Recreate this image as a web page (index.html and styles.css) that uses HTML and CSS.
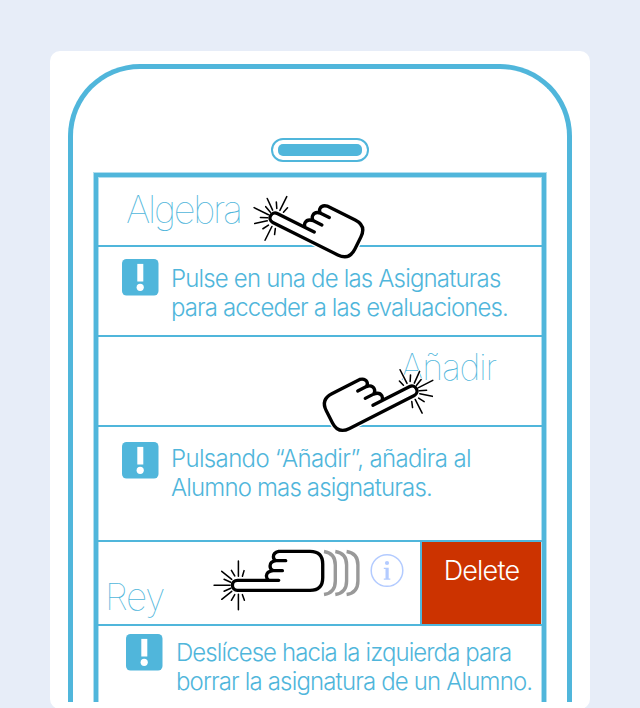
FILE: index.html
```html
<!DOCTYPE html>
<html lang="es">
<head>
<meta charset="utf-8">
<title>Asignaturas</title>
<link rel="stylesheet" href="styles.css">
</head>
<body>
<svg class="defs" aria-hidden="true">
  <defs>
    <path id="hand-shape" d="M124 -15H0A15 15 0 0 0 0 15H218Q256 15 256 -23V-64Q256 -102 218 -102H124Q108 -98 108 -86Q108 -78 116 -74H145M116 -74Q98 -72 98 -58Q98 -48 107 -44H135M107 -44Q88 -42 87 -28Q87 -20 94 -15"/>
    <path id="rays" d="M3 -73V-27M3 27V73M-70 0H-22M-47 -42L-17 -18M-47 42L-17 18M-18 -45L-8 -28M20 -44L15 -27M-18 45L-8 28M15 28L21 45M-40 -18L-20 -9M-40 18L-20 9"/>
    <g id="hand">
      <use href="#rays" class="ray-halo"/>
      <use href="#hand-shape" class="hand-halo"/>
      <use href="#hand-shape" class="hand-line"/>
      <use href="#rays" class="ray-line"/>
    </g>
    <symbol id="alert" viewBox="0 0 37 37">
      <rect width="36.5" height="36.5" rx="4.5" fill="#50b6db"/>
      <rect x="15.3" y="4.9" width="6" height="17.6" fill="#fff"/>
      <circle cx="18.2" cy="28.3" r="3.6" fill="#fff"/>
    </symbol>
  </defs>
</svg>
<main class="card">
  <div class="phone">
    <div class="speaker"><div class="speaker-slot"></div></div>
    <div class="screen">
      <section class="row row-subject">
        <h2 class="thin subject">Algebra</h2>
        <svg class="tap tap-subject" viewBox="0 0 150 110"><use href="#hand" transform="translate(45 58) rotate(26.5) scale(.3333)"/></svg>
      </section>
      <section class="row row-note note-one">
        <svg class="alert"><use href="#alert"/></svg>
        <p class="note"><span class="l1">Pulse en una de las Asignaturas</span><br><span class="l2">para acceder a las evaluaciones.</span></p>
      </section>
      <section class="row row-add">
        <h2 class="thin add">Añadir</h2>
        <svg class="tap tap-add" viewBox="0 0 150 110"><use href="#hand" transform="translate(102 51) rotate(-27) scale(-.3333 .3333)"/></svg>
      </section>
      <section class="row row-note note-two">
        <svg class="alert"><use href="#alert"/></svg>
        <p class="note"><span class="l3">Pulsando “Añadir”, añadira al</span><br><span class="l4">Alumno mas asignaturas.</span></p>
      </section>
      <section class="row row-swipe">
        <h2 class="thin student">Rey</h2>
        <svg class="tap tap-swipe" viewBox="0 0 200 80">
          <use href="#hand" transform="translate(37.4 45.3) scale(.3333)"/>
          <g fill="none" stroke="#999" stroke-width="3.4">
            <path id="wave" d="M124 11.5C131 12.5 135.3 17 135.3 25V41C135.3 49 131 53.500 124 54.500"/>
            <use href="#wave" x="11.300"/>
            <use href="#wave" x="22.600"/>
          </g>
          <circle cx="187" cy="30.500" r="15.800" fill="none" stroke="#b3cbff" stroke-width="1.500"/>
          <circle cx="187" cy="23" r="2.100" fill="#b3cbff"/>
          <path d="M183.800 27.700H188.700V38.500H190.300V39.800H183.800V38.500H185.500V29H183.800Z" fill="#b3cbff"/>
        </svg>
        <div class="delete">Delete</div>
      </section>
      <section class="row-note note-three">
        <svg class="alert"><use href="#alert"/></svg>
        <p class="note"><span class="l5">Deslícese hacia la izquierda para</span><br><span class="l6">borrar la asignatura de un Alumno.</span></p>
      </section>
    </div>
  </div>
</main>
</body>
</html>
```
FILE: styles.css
```css
* { box-sizing: border-box; }
body {
  margin: 0;
  height: 708px;
  padding: 51px 50px 0;
  overflow: hidden;
  background: #e7edf8;
  color: #50b6db;
  font-family: Inter, "Liberation Sans", sans-serif;
}
h2, p { margin: 0; }
.defs { position: absolute; width: 0; height: 0; }
.card {
  height: 658px;
  padding: 13px 18px 0;
  border-radius: 10px;
  background: #fff;
}
.phone {
  height: 638px;
  padding: 69px 21px 0;
  border: 5px solid #50b6db;
  border-bottom: 0;
  border-radius: 72px 72px 0 0;
}
.speaker {
  width: 98px;
  height: 24px;
  margin: 0 auto;
  padding: 4px 5px;
  border: 2px solid #50b6db;
  border-radius: 12px;
}
.speaker-slot { height: 12px; border-radius: 5px; background: #50b6db; }
.screen {
  height: 533px;
  margin-top: 11px;
  border: 4px solid #50b6db;
  border-bottom: 0;
  box-shadow: 0 0 0 1px rgba(80, 182, 219, .45), inset 0 0 0 1px rgba(80, 182, 219, .45);
  clip-path: inset(-1px -1px 4px -1px);
}
.row { position: relative; border-bottom: 2px solid #50b6db; }
.row-subject { height: 70px; padding: 9px 0 0 28px; z-index: 1; }
.thin { font-weight: 100; line-height: 46px; white-space: nowrap; }
.subject { font-size: 38px; letter-spacing: -2.3px; }
.note-one { height: 90px; padding: 12px 0 0 24px; }
.row-note { display: flex; }
.alert { width: 37px; height: 37px; flex: none; }
.note {
  margin: 5px 0 0 12px;
  font-size: 24px;
  font-weight: 300;
  line-height: 29px;
  white-space: nowrap;
}
.l1 { letter-spacing: -.83px; }
.l2 { letter-spacing: -.88px; }
.l3 { letter-spacing: -.65px; }
.l4 { letter-spacing: -.85px; }
.l5 { letter-spacing: -.92px; }
.l6 { letter-spacing: -.85px; }
.row-add { height: 90px; padding: 7px 46px 0 0; text-align: right; z-index: 1; }
.add { font-size: 36px; letter-spacing: -1.3px; }
.note-two { height: 115px; padding: 15px 0 0 24px; }
.note-two .note { margin-top: 2px; }
.row-swipe { display: flex; justify-content: space-between; height: 84px; }
.student { padding: 32px 0 0 7px; font-size: 37px; letter-spacing: -1.3px; }
.delete {
  width: 121px;
  margin-right: 1px;
  padding-top: 11px;
  border-left: 2px solid #50b6db;
  background: #c30;
  color: #fff;
  font-size: 27px;
  font-weight: 300;
  letter-spacing: -.8px;
  line-height: 36px;
  text-align: center;
}
.note-three { padding: 8px 0 0 28px; }
.note-three .note { margin: 4px 0 0 13px; }
.tap { position: absolute; overflow: visible; }
.tap-subject { left: 132px; top: -17px; width: 150px; height: 110px; }
.tap-add { left: 212px; top: 3px; width: 150px; height: 110px; }
.tap-swipe { left: 102px; top: -2px; width: 200px; height: 80px; }
.hand-halo { fill: none; stroke: #fff; stroke-width: 18; stroke-linecap: round; }
.ray-halo { fill: none; stroke: #fff; stroke-width: 10; stroke-linecap: round; }
.hand-line { fill: #fff; stroke: #000; stroke-width: 10; stroke-linecap: round; stroke-linejoin: round; }
.ray-line { fill: none; stroke: #000; stroke-width: 4.6; stroke-linecap: round; }
```
